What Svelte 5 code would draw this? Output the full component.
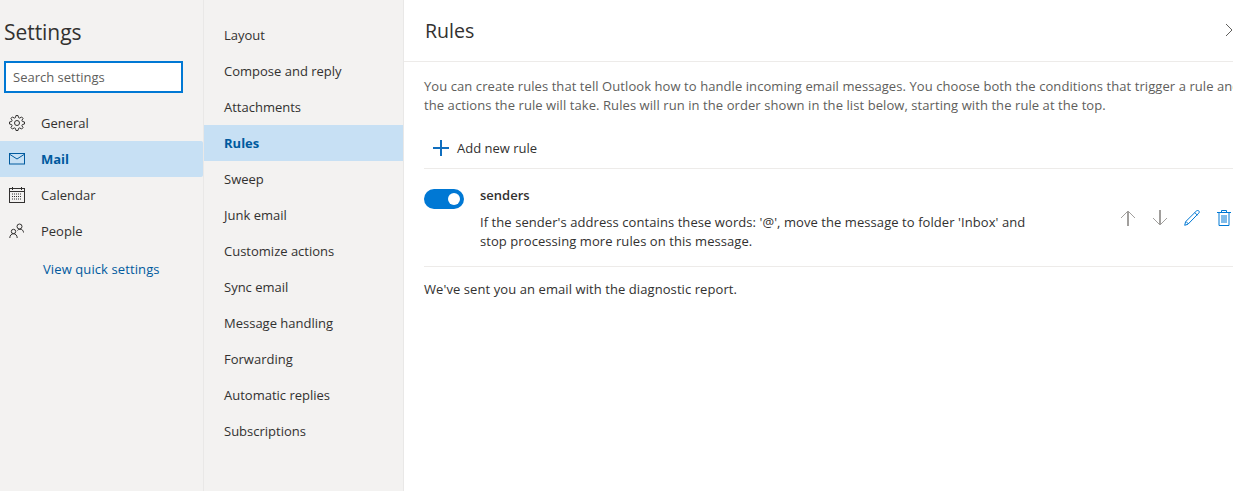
<script>
  const left = [
    { id: 'gear', label: 'General' },
    { id: 'mail', label: 'Mail', active: true },
    { id: 'cal', label: 'Calendar' },
    { id: 'people', label: 'People' }
  ];
  const mid = ['Layout','Compose and reply','Attachments','Rules','Sweep','Junk email','Customize actions','Sync email','Message handling','Forwarding','Automatic replies','Subscriptions'];
  function gearPath() {
    const pts = [];
    const teeth = 8;
    for (let i = 0; i < teeth; i++) {
      const a = (i / teeth) * Math.PI * 2;
      const s = Math.PI * 2 / teeth;
      [[-0.36, 5.6], [-0.17, 7.6], [0.17, 7.6], [0.36, 5.6]].forEach(([f, r]) => {
        const t = a + f * s;
        pts.push((8 + r * Math.cos(t)).toFixed(2) + ' ' + (8 + r * Math.sin(t)).toFixed(2));
      });
    }
    return 'M' + pts.join('L') + 'Z';
  }
  const gear = gearPath();
</script>

<div class="page">
  <aside class="left">
    <h1>Settings</h1>
    <div class="search">Search settings</div>
    <nav class="leftnav">
      {#each left as item}
        <div class="leftitem" class:active={item.active}>
          <span class="ico">
            {#if item.id === 'gear'}
              <svg width="16" height="16" viewBox="0 0 16 16" fill="none" stroke="#323130" stroke-width="1"><circle cx="8" cy="8" r="2.5"/><path d={gear}/></svg>
            {:else if item.id === 'mail'}
              <svg width="16" height="12" viewBox="0 0 16 12" fill="none" stroke="#005a9e" stroke-width="1"><rect x=".5" y=".5" width="15" height="10.5"/><path d="M1 1.5l7 4.5 7-4.5"/></svg>
            {:else if item.id === 'cal'}
              <svg width="16" height="16" viewBox="0 0 16 16" fill="none" stroke="#323130" stroke-width="1"><rect x=".5" y="1.5" width="15" height="14"/><path d="M1 4.5h14M3.5 0v3M12.5 0v3"/><path d="M3 7h10M3 9.5h10M3 12h10" stroke-dasharray="1 1"/></svg>
            {:else}
              <svg width="16" height="16" viewBox="0 0 16 16" fill="none" stroke="#323130" stroke-width="1"><circle cx="10.5" cy="3.5" r="2.5"/><circle cx="4.5" cy="8.5" r="2.2"/><path d="M.8 15c0-2.5 1.6-4.3 3.7-4.3s3.7 1.8 3.7 4.3M8.5 7.5c.5-.9 1.5-1.3 2.5-1.3 2 0 3.5 1.4 3.5 3.3"/></svg>
            {/if}
          </span>
          <span>{item.label}</span>
        </div>
      {/each}
    </nav>
    <div class="quick">View quick settings</div>
  </aside>

  <nav class="mid">
    {#each mid as m}
      <div class="miditem" class:active={m === 'Rules'}>{m}</div>
    {/each}
  </nav>

  <main class="main">
    <header class="head">
      <h2>Rules</h2>
      <svg class="close" width="10" height="14" viewBox="0 0 10 14" fill="none" stroke="#605e5c" stroke-width="1"><path d="M1 1l6 6-6 6"/></svg>
    </header>
    <div class="body">
      <p class="intro">You can create rules that tell Outlook how to handle incoming email messages. You choose both the conditions that trigger a rule and the actions the rule will take. Rules will run in the order shown in the list below, starting with the rule at the top.</p>
      <div class="add">
        <svg width="16" height="16" viewBox="0 0 16 16" stroke="#106ebe" stroke-width="2" fill="none"><path d="M8 0v16M0 8h16"/></svg>
        <span>Add new rule</span>
      </div>
      <div class="rule">
        <div class="toggle"><span class="knob"></span></div>
        <div class="ruletext">
          <div class="name">senders</div>
          <div class="desc">If the sender's address contains these words: '@', move the message to folder 'Inbox' and stop processing more rules on this message.</div>
        </div>
        <div class="actions">
          <svg width="16" height="16" viewBox="0 0 16 16" fill="none" stroke="#a19f9d"><path d="M8 16V1" stroke-width="2"/><path d="M1 8l7-7 7 7"/></svg>
          <svg width="16" height="16" viewBox="0 0 16 16" fill="none" stroke="#a19f9d"><path d="M8 0v15" stroke-width="2"/><path d="M1 8l7 7 7-7"/></svg>
          <svg class="pen" width="16" height="16" viewBox="0 0 16 16" fill="none" stroke="#0078d4"><path d="M.7 15.3l.9-3.6L12.4 1c.8-.7 1.8-.7 2.4-.1s.6 1.6-.1 2.3L4 14.2z"/><path d="M10.8 2.6l2.7 2.7M2 11.5l2.5 2.5"/></svg>
          <svg width="14" height="16" viewBox="0 0 14 16" fill="none" stroke="#0078d4"><path d="M0 2.5h14M2 2.5v13h10v-13M4.5 2.5v-2h5v2"/><path d="M5 5v8M7 5v8M9 5v8"/></svg>
        </div>
      </div>
      <p class="report">We've sent you an email with the diagnostic report.</p>
    </div>
  </main>
</div>

<style>
  :global(body) { margin: 0; background: #fff; }
  .page {
    display: flex; width: 1233px; height: 491px; overflow: hidden;
    font-family: "Open Sans", "Noto Sans", sans-serif; font-size: 13px; color: #323130;
  }
  .left {
    width: 203px; flex: none; background: #f3f2f1; border-right: 1px solid #e9e8e7;
    display: flex; flex-direction: column; padding-top: 17px;
  }
  h1 { margin: 0 0 0 4px; font-size: 21px; letter-spacing: -.05px; line-height: 30px; font-weight: 400; color: #323130; }
  .search {
    margin: 14px 0 0 4px; width: 179px; height: 32px; box-sizing: border-box;
    border: 2px solid #0078d4; background: #fff; color: #605e5c;
    padding-left: 7px; line-height: 28px;
  }
  .leftnav { margin-top: 12px; display: flex; flex-direction: column; }
  .leftitem { height: 36px; display: flex; align-items: center; }
  .leftitem .ico { width: 41px; padding-left: 9px; box-sizing: border-box; display: flex; align-items: center; }
  .leftitem.active { background: #c7e0f4; color: #005a9e; font-weight: 700; border-radius: 0 2px 2px 0; }
  .quick { margin: 11px 0 0 43px; color: #005a9e; line-height: 18px; letter-spacing: .1px; }
  .mid {
    width: 199px; flex: none; background: #f3f2f1; border-right: 1px solid #e9e8e7;
    padding-top: 17px;
  }
  .miditem { height: 36px; line-height: 36px; padding-left: 20px; }
  .miditem.active { background: #c7e0f4; color: #005a9e; font-weight: 700; }
  .main { flex: 1; min-width: 0; }
  .head { height: 61px; border-bottom: 1px solid #edebe9; display: flex; align-items: center; padding-left: 21px; position: relative; }
  h2 { margin: 0; font-size: 19.6px; font-weight: 400; }
  .close { position: absolute; left: 821px; top: 23px; }
  .body { padding: 0 0 0 20px; }
  .intro { margin: 15px 0 0; width: 830px; line-height: 19px; color: #605e5c; letter-spacing: .075px; }
  .add { height: 36px; padding-bottom: 2px; margin-top: 15px; padding-left: 9px; display: flex; align-items: center; gap: 8px; border-bottom: 1px solid #edebe9; }
  .rule { display: flex; height: 97px; border-bottom: 1px solid #edebe9; }
  .toggle { width: 40px; height: 20px; border-radius: 10px; background: #0078d4; margin-top: 20px; position: relative; flex: none; }
  .knob { position: absolute; right: 4px; top: 4px; width: 12px; height: 12px; border-radius: 50%; background: #fff; }
  .ruletext { margin-left: 16px; width: 560px; flex: none; padding-top: 16px; }
  .name { font-weight: 600; line-height: 20px; }
  .desc { margin-top: 8px; line-height: 19px; letter-spacing: .07px; }
  .actions { margin-left: 80px; padding-top: 41px; display: flex; gap: 16px; align-items: flex-start; flex: none; }
  .pen { margin-right: 1px; }
  .report { margin: 12px 0 0; line-height: 20px; letter-spacing: .08px; }
</style>
